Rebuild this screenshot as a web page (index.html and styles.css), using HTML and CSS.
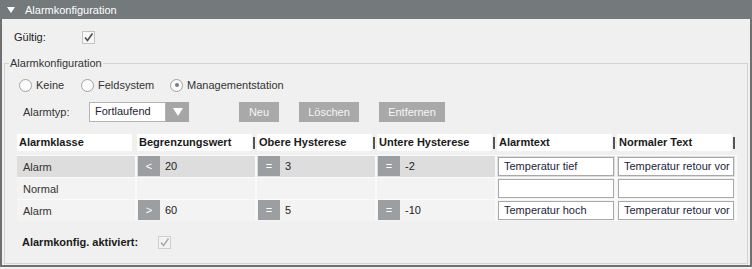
FILE: index.html
```html
<!DOCTYPE html>
<html lang="de">
<head>
<meta charset="utf-8">
<title>Alarmkonfiguration</title>
<link rel="stylesheet" href="styles.css">
</head>
<body>
<div class="panel">
  <div class="panel-header">
    <span class="caret"></span>
    <span class="panel-title">Alarmkonfiguration</span>
  </div>
  <div class="valid-row">
    <span class="valid-label">Gültig:</span>
    <span class="check">
      <svg width="11" height="11" viewBox="0 0 11 11"><polyline points="2,5.5 4.5,8.5 9.5,1.5" fill="none" stroke="#4d4d4d" stroke-width="1.6"/></svg>
    </span>
  </div>
  <fieldset class="group">
    <legend>Alarmkonfiguration</legend>
    <div class="radio-row">
      <label class="opt opt-1"><span class="radio"></span>Keine</label>
      <label class="opt opt-2"><span class="radio"></span>Feldsystem</label>
      <label class="opt"><span class="radio radio-on"></span>Managementstation</label>
    </div>
    <div class="type-row">
      <span class="type-label">Alarmtyp:</span>
      <div class="combo">
        <span class="combo-text">Fortlaufend</span>
        <span class="combo-btn"><svg width="10" height="8" viewBox="0 0 10 8"><polygon points="0,0 10,0 5,8" fill="#ffffff"/></svg></span>
      </div>
      <button class="btn btn-neu">Neu</button>
      <button class="btn btn-del">Löschen</button>
      <button class="btn btn-rem">Entfernen</button>
    </div>
    <div class="table">
      <div class="thead">
        <div class="th"><span class="th-label">Alarmklasse</span><span class="grip grip-none"></span></div>
        <div class="th"><span class="th-label">Begrenzungswert</span><span class="grip"></span></div>
        <div class="th"><span class="th-label">Obere Hysterese</span><span class="grip"></span></div>
        <div class="th"><span class="th-label">Untere Hysterese</span><span class="grip"></span></div>
        <div class="th"><span class="th-label">Alarmtext</span><span class="grip"></span></div>
        <div class="th"><span class="th-label">Normaler Text</span><span class="grip"></span></div>
      </div>
      <div class="tr tr-sel">
        <div class="td td-text">Alarm</div>
        <div class="td"><span class="badge">&lt;</span><span class="val">20</span></div>
        <div class="td"><span class="badge">=</span><span class="val">3</span></div>
        <div class="td"><span class="badge">=</span><span class="val">-2</span></div>
        <div class="td"><span class="field">Temperatur tief</span></div>
        <div class="td"><span class="field">Temperatur retour vor</span></div>
      </div>
      <div class="tr">
        <div class="td td-text">Normal</div>
        <div class="td"></div>
        <div class="td"></div>
        <div class="td"></div>
        <div class="td"><span class="field"></span></div>
        <div class="td"><span class="field"></span></div>
      </div>
      <div class="tr">
        <div class="td td-text">Alarm</div>
        <div class="td"><span class="badge">&gt;</span><span class="val">60</span></div>
        <div class="td"><span class="badge">=</span><span class="val">5</span></div>
        <div class="td"><span class="badge">=</span><span class="val">-10</span></div>
        <div class="td"><span class="field">Temperatur hoch</span></div>
        <div class="td"><span class="field">Temperatur retour vor</span></div>
      </div>
    </div>
    <div class="active-row">
      <span class="active-label">Alarmkonfig. aktiviert:</span>
      <span class="check check-off">
        <svg width="11" height="11" viewBox="0 0 11 11"><polyline points="2,5.5 4.5,8.5 9.5,1.5" fill="none" stroke="#ababab" stroke-width="1.5"/></svg>
      </span>
    </div>
  </fieldset>
</div>
</body>
</html>
```
FILE: styles.css
```css
html, body {
  margin: 0;
  padding: 0;
  background: #f0f0f0;
}
body {
  font-family: "Liberation Sans", Arial, sans-serif;
  font-size: 11px;
  color: #262626;
}
.panel {
  width: 752px;
  height: 267px;
  box-sizing: border-box;
  border-left: 2px solid #707070;
  border-right: 2px solid #707070;
  border-bottom: 2px solid #707070;
  background: #f0f0f0;
  display: flex;
  flex-direction: column;
}
.panel-header {
  height: 19px;
  margin: 0 -2px;
  background: #74797c;
  display: flex;
  align-items: center;
  color: #ffffff;
  font-size: 11px;
}
.caret {
  width: 0;
  height: 0;
  border-left: 4px solid transparent;
  border-right: 4px solid transparent;
  border-top: 6px solid #ffffff;
  margin-left: 7px;
  margin-right: 10px;
}
.valid-row {
  height: 36px;
  display: flex;
  align-items: center;
  padding-left: 12px;
}
.valid-label {
  width: 68px;
  color: #222;
}
.check {
  width: 11px;
  height: 11px;
  border: 1px solid #c3c3c3;
  background: #f7f7f7;
  display: flex;
}
.check-off {
  border-color: #cfcfcf;
  background: #f3f3f3;
}
.group {
  margin: 2px 2px 1px 2px;
  padding: 0 0 11px 0;
  border: 1px solid #d3d3d3;
  min-width: 0;
}
.group legend {
  padding: 0 1px;
  margin-left: 4px;
  line-height: 13px;
  color: #333;
}
.radio-row {
  height: 18px;
  margin-top: 6px;
  padding-left: 14px;
  display: flex;
  align-items: center;
}
.opt {
  display: flex;
  align-items: center;
  color: #333;
}
.opt-1 { width: 62px; }
.opt-2 { width: 89px; }
.radio {
  width: 11px;
  height: 11px;
  border: 1px solid #a3a3a3;
  border-radius: 50%;
  background: #fbfbfb;
  margin-right: 4px;
  display: flex;
  align-items: center;
  justify-content: center;
}
.radio-on::after {
  content: "";
  width: 4px;
  height: 4px;
  border-radius: 50%;
  background: #7c7c7c;
}
.type-row {
  height: 20px;
  margin-top: 8px;
  padding-left: 18px;
  display: flex;
  align-items: center;
}
.type-label {
  width: 66px;
  color: #333;
}
.combo {
  width: 100px;
  height: 20px;
  display: flex;
}
.combo-text {
  flex: 1;
  box-sizing: border-box;
  border: 1px solid #b4b4b4;
  background: #ffffff;
  padding-left: 5px;
  line-height: 17px;
  color: #1e2433;
}
.combo-btn {
  width: 23px;
  background: #a6a6a6;
  display: flex;
  align-items: center;
  justify-content: center;
}
.btn {
  height: 20px;
  border: none;
  padding: 0;
  background: #a9a9a9;
  color: #f6f6f6;
  font-family: "Liberation Sans", Arial, sans-serif;
  font-size: 11px;
}
.btn-neu { width: 40px; margin-left: 50px; }
.btn-del { width: 60px; margin-left: 20px; }
.btn-rem { width: 66px; margin-left: 20px; }
.table {
  margin-top: 12px;
  margin-left: 12px;
  width: 720px;
}
.thead {
  display: grid;
  grid-template-columns: repeat(6, 120px);
  height: 17px;
  margin-bottom: 4px;
}
.th {
  display: flex;
  align-items: center;
}
.th-label {
  flex: 1;
  height: 17px;
  background: #ffffff;
  font-weight: bold;
  color: #1a1a1a;
  padding-left: 2px;
  line-height: 17px;
  white-space: nowrap;
  overflow: hidden;
}
.grip {
  width: 2px;
  height: 12px;
  background: #555;
  margin-left: 1px;
  margin-right: 2px;
}
.grip-none {
  background: transparent;
}
.tr {
  display: grid;
  grid-template-columns: repeat(6, 120px);
  height: 22px;
  box-sizing: border-box;
  border-top: 1px solid #fbfbfb;
  background: #f3f3f3;
}
.tr-sel {
  background: #dddddd;
}
.td {
  display: flex;
  align-items: flex-start;
  border-right: 2px solid #fafafa;
  padding-left: 1px;
}
.td-text {
  align-items: center;
  padding-left: 6px;
  color: #333;
}
.badge {
  width: 22px;
  height: 20px;
  background: #9b9fa2;
  color: #ffffff;
  display: flex;
  align-items: center;
  justify-content: center;
  font-size: 11px;
}
.val {
  margin-left: 5px;
  line-height: 20px;
  color: #222;
}
.field {
  margin-top: 1px;
  width: 116px;
  height: 19px;
  box-sizing: border-box;
  border: 1px solid #a9a9a9;
  background: #ffffff;
  padding-left: 5px;
  line-height: 17px;
  color: #1c2440;
  white-space: nowrap;
  overflow: hidden;
}
.active-row {
  height: 20px;
  margin-top: 11px;
  padding-left: 17px;
  display: flex;
  align-items: center;
}
.active-label {
  width: 136px;
  font-weight: bold;
  color: #1a1a1a;
}
```
